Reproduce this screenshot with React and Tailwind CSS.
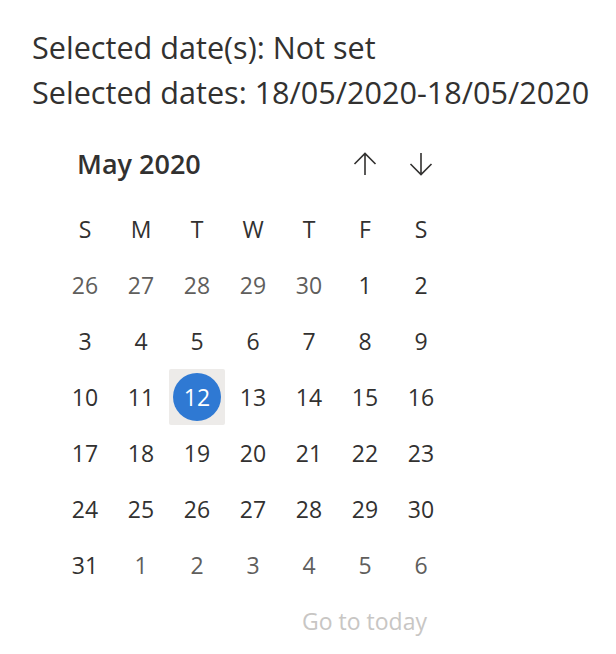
import React from 'react';

const weekdays = ['S', 'M', 'T', 'W', 'T', 'F', 'S'];

const weeks = [
  [[26, true], [27, true], [28, true], [29, true], [30, true], [1], [2]],
  [[3], [4], [5], [6], [7], [8], [9]],
  [[10], [11], [12], [13], [14], [15], [16]],
  [[17], [18], [19], [20], [21], [22], [23]],
  [[24], [25], [26], [27], [28], [29], [30]],
  [[31], [1, true], [2, true], [3, true], [4, true], [5, true], [6, true]],
];

function ArrowUp() {
  return (
    <svg width="24" height="24" viewBox="0 0 24 24" fill="none" stroke="#323130" strokeWidth="1.6">
      <path d="M12 23V1.5M1.5 12L12 1.5L22.5 12" />
    </svg>
  );
}

function ArrowDown() {
  return (
    <svg width="24" height="24" viewBox="0 0 24 24" fill="none" stroke="#323130" strokeWidth="1.6">
      <path d="M12 1V22.5M1.5 12L12 22.5L22.5 12" />
    </svg>
  );
}

function DayCell({ day, outside, selected }) {
  if (selected) {
    return (
      <div className="h-[56px] flex items-center justify-center bg-[#edebe9] rounded-[2px]">
        <div className="w-[48px] h-[48px] rounded-full bg-[#2f79d3] text-white flex items-center justify-center">
          {day}
        </div>
      </div>
    );
  }
  return (
    <div className={`h-[56px] flex items-center justify-center ${outside ? 'text-[#605e5c]' : 'text-[#323130]'}`}>
      {day}
    </div>
  );
}

export default function App() {
  return (
    <div className="bg-white w-[616px] h-[654px] pt-[25px] text-[#323130]" style={{ fontFamily: '"Open Sans", "Noto Sans", sans-serif' }}>
      <div className="pl-[32px] text-[30.6px] leading-[45px]">
        <div>Selected date(s): Not set</div>
        <div>Selected dates: 18/05/2020-18/05/2020</div>
      </div>

      <div className="ml-[57px] mt-[21px] w-[392px]">
        <div className="h-[56px] flex items-center">
          <div className="flex-1 pl-[20px] text-[27px] font-semibold">May 2020</div>
          <div className="w-[56px] h-[56px] flex items-center justify-center"><ArrowUp /></div>
          <div className="w-[56px] h-[56px] flex items-center justify-center"><ArrowDown /></div>
        </div>

        <div className="mt-[9px] grid grid-cols-7 text-[23px]">
          {weekdays.map((d, i) => (
            <div key={i} className="h-[56px] flex items-center justify-center text-[#323130]">{d}</div>
          ))}
          {weeks.flat().map(([day, outside], i) => (
            <DayCell key={i} day={day} outside={outside} selected={day === 12 && !outside} />
          ))}
        </div>

        <div className="h-[56px] flex items-center justify-end pr-[22px] text-[23px] text-[#c8c6c4]">
          Go to today
        </div>
      </div>
    </div>
  );
}
